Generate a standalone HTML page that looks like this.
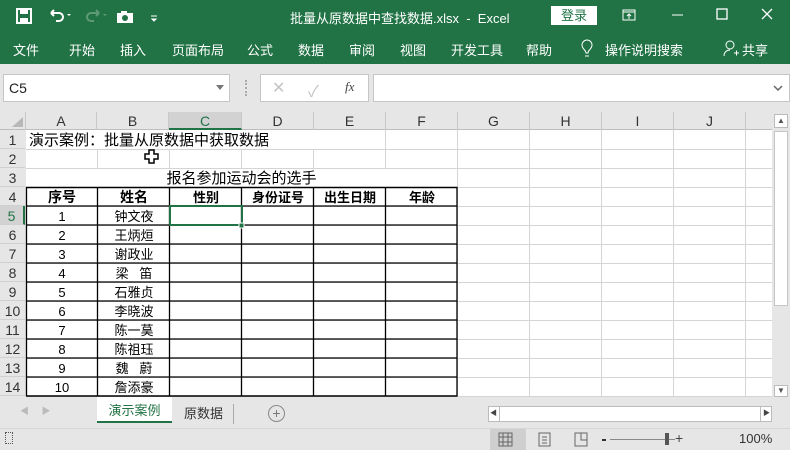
<!DOCTYPE html>
<html><head><meta charset="utf-8"><style>
*{margin:0;padding:0;box-sizing:border-box}
body{width:790px;height:450px;overflow:hidden;background:#e6e6e6;font-family:"Liberation Sans","Noto Sans CJK SC",sans-serif;position:relative}
.a{position:absolute}
.w{color:#fff}
.tab{position:absolute;top:40px;font-size:13px;color:#fff}
.ch{position:absolute;top:112px;height:18px;font-size:14px;color:#333;text-align:center;line-height:19px;border-right:1px solid #c8c8c8}
.rh{position:absolute;left:0;width:25px;height:19px;font-size:14px;color:#333;text-align:center;line-height:20px;border-bottom:1px solid #d0d0d0;background:#e6e6e6}
.hl{position:absolute;left:26px;width:746px;height:1px;background:#d4d4d4}
.vl{position:absolute;top:130px;width:1px;height:266px;background:#d4d4d4}
.c{position:absolute;font-size:13px;color:#000;text-align:center;line-height:19px;height:19px;font-family:"Liberation Sans","Noto Sans CJK SC",sans-serif}
</style></head><body>
<div class="a" style="left:0;top:0;width:790px;height:64px;background:#217346"></div>
<svg class="a" style="left:16px;top:8px" width="160" height="18" viewBox="0 0 160 18">
<rect x="1" y="1" width="14" height="14" fill="none" stroke="#fff" stroke-width="2"/><rect x="4" y="1" width="8" height="5" fill="#fff"/><rect x="4" y="10" width="8" height="5" fill="#fff"/>
<path d="M35 5h8a4 4 0 0 1 0 8h-3M35 5l3-3M35 5l3 3" stroke="#fff" stroke-width="2" fill="none"/><path d="M51 6l2 2 2-2z" fill="#fff"/>
<path d="M83 5h-8a4 4 0 0 0 0 8h3M83 5l-3-3M83 5l-3 3" stroke="#5f9a78" stroke-width="2" fill="none"/><path d="M87 6l2 2 2-2z" fill="#5f9a78"/>
<rect x="101" y="5" width="16" height="10" fill="#fff"/><rect x="105" y="3" width="6" height="3" fill="#fff"/><circle cx="109" cy="10" r="3" fill="#217346"/>
<path d="M135 8h6M136 11l2 2 2-2z" stroke="#fff" fill="#fff"/>
</svg>
<div class="a w" style="left:290px;top:8px;font-size:13px">批量从原数据中查找数据.xlsx&nbsp; - &nbsp;Excel</div>
<div class="a" style="left:551px;top:6px;width:46px;height:19px;background:#fff;color:#217346;font-size:13px;text-align:center;line-height:19px">登录</div>
<svg class="a" style="left:620px;top:6px" width="170" height="20"><rect x="3" y="4" width="12" height="10" fill="none" stroke="#fff"/><path d="M3 6h12M9 13V8M7 10l2-2 2 2" stroke="#fff" fill="none"/><path d="M52 9h11" stroke="#fff"/><rect x="97" y="3" width="10" height="10" fill="none" stroke="#fff" stroke-width="1.3"/><path d="M142 3l10 10M152 3l-10 10" stroke="#fff" stroke-width="1.3"/></svg>
<div class="tab" style="left:13px">文件</div><div class="tab" style="left:69px">开始</div><div class="tab" style="left:120px">插入</div><div class="tab" style="left:172px">页面布局</div><div class="tab" style="left:247px">公式</div><div class="tab" style="left:298px">数据</div><div class="tab" style="left:349px">审阅</div><div class="tab" style="left:400px">视图</div><div class="tab" style="left:451px">开发工具</div><div class="tab" style="left:526px">帮助</div>
<svg class="a" style="left:578px;top:38px" width="20" height="22"><path d="M8 15c0-3-4-4-4-8a5 5 0 0 1 10 0c0 4-4 5-4 8zM7 18h4" stroke="#fff" fill="none"/></svg>
<div class="tab" style="left:605px">操作说明搜索</div>
<svg class="a" style="left:722px;top:38px" width="18" height="22"><circle cx="8" cy="7" r="4" stroke="#fff" fill="none"/><path d="M2 18c0-4 3-6 6-6M12 15h5M14.5 12.5v5" stroke="#fff" fill="none"/></svg>
<div class="tab" style="left:742px">共享</div>
<div class="a" style="left:3px;top:74px;width:227px;height:28px;background:#fff;border:1px solid #c6c6c6;font-size:14px;line-height:27px;padding-left:5px;color:#222">C5</div>
<svg class="a" style="left:216px;top:85px" width="8" height="6"><path d="M0 0h8L4 5z" fill="#777"/></svg>
<div class="a" style="left:245px;top:80px;width:2px;height:16px;border-left:2px dotted #aaa"></div>
<div class="a" style="left:260px;top:74px;width:109px;height:28px;background:#fff;border:1px solid #c6c6c6"></div>
<div class="a" style="left:272px;top:78px;font-size:16px;color:#c4c4c4">✕</div><div class="a" style="left:308px;top:78px;font-size:16px;color:#c4c4c4">✓</div><div class="a" style="left:345px;top:79px;font-size:13px;font-style:italic;font-family:'Liberation Serif',serif;color:#444">fx</div>
<div class="a" style="left:373px;top:74px;width:417px;height:28px;background:#fff;border:1px solid #c6c6c6"></div>
<svg class="a" style="left:773px;top:85px" width="10" height="6"><path d="M1 1l4 4 4-4" stroke="#666" fill="none" stroke-width="1.5"/></svg>
<div class="a" style="left:0;top:112px;width:772px;height:18px;background:#e6e6e6;border-bottom:1px solid #bdbdbd"></div>
<div class="a" style="left:26px;top:130px;width:746px;height:267px;background:#fff"></div>
<svg class="a" style="left:10px;top:116px" width="14" height="12"><path d="M13 1v10H2z" fill="#b8b8b8"/></svg>
<div class="ch" style="left:25px;width:72px;border-left:1px solid #c8c8c8">A</div>
<div class="ch" style="left:97px;width:72px">B</div>
<div class="ch" style="left:169px;width:73px;background:#d2d2d2;border-bottom:2px solid #217346;color:#217346">C</div>
<div class="ch" style="left:242px;width:72px">D</div><div class="ch" style="left:314px;width:72px">E</div><div class="ch" style="left:386px;width:72px">F</div><div class="ch" style="left:458px;width:72px">G</div><div class="ch" style="left:530px;width:72px">H</div><div class="ch" style="left:602px;width:72px">I</div><div class="ch" style="left:674px;width:72px">J</div>
<div class="a" style="left:772px;top:112px;width:18px;height:285px;background:#e6e6e6"></div>
<div class="a" style="left:774px;top:114px;width:14px;height:14px;background:#fff;border:1px solid #bbb;font-size:8px;text-align:center;line-height:12px;color:#555">▲</div>
<div class="a" style="left:774px;top:131px;width:14px;height:175px;background:#fff;border:1px solid #c6c6c6"></div>
<div class="a" style="left:774px;top:385px;width:14px;height:12px;background:#fff;border:1px solid #bbb;font-size:8px;text-align:center;line-height:10px;color:#555">▼</div>
<div class="vl" style="left:97px"></div><div class="vl" style="left:169px"></div><div class="vl" style="left:241px"></div><div class="vl" style="left:313px"></div><div class="vl" style="left:385px"></div><div class="vl" style="left:457px"></div><div class="vl" style="left:529px"></div><div class="vl" style="left:601px"></div><div class="vl" style="left:673px"></div><div class="vl" style="left:745px"></div>
<div class="hl" style="top:149px"></div><div class="hl" style="top:168px"></div><div class="hl" style="top:187px"></div><div class="hl" style="top:206px"></div><div class="hl" style="top:225px"></div><div class="hl" style="top:244px"></div><div class="hl" style="top:263px"></div><div class="hl" style="top:282px"></div><div class="hl" style="top:301px"></div><div class="hl" style="top:320px"></div><div class="hl" style="top:339px"></div><div class="hl" style="top:358px"></div><div class="hl" style="top:377px"></div><div class="hl" style="top:396px"></div>
<div class="a" style="left:26px;top:130px;width:359px;height:19px;background:#fff"></div>
<div class="a" style="left:26px;top:169px;width:431px;height:18px;background:#fff"></div>
<div class="rh" style="top:130px">1</div><div class="rh" style="top:149px">2</div><div class="rh" style="top:168px">3</div><div class="rh" style="top:187px">4</div><div class="rh" style="top:206px;background:#d2d2d2;color:#217346;border-right:2px solid #217346">5</div><div class="rh" style="top:225px">6</div><div class="rh" style="top:244px">7</div><div class="rh" style="top:263px">8</div><div class="rh" style="top:282px">9</div><div class="rh" style="top:301px">10</div><div class="rh" style="top:320px">11</div><div class="rh" style="top:339px">12</div><div class="rh" style="top:358px">13</div><div class="rh" style="top:377px">14</div>
<svg class="a" style="left:0;top:0" width="790" height="450">
<g stroke="#000" stroke-width="1.5">
<path d="M26 187.5H457.5M26 396H457.5"/>
<path d="M26 206H457M26 225H457M26 244H457M26 263H457M26 282H457M26 301H457M26 320H457M26 339H457M26 358H457M26 377H457" stroke-width="1.2"/>
<path d="M26.5 187V396M97.5 187V396M169.5 187V396M241.5 187V396M313.5 187V396M385.5 187V396M457 187V396" stroke-width="1.3"/>
</g>
<rect x="170" y="206" width="72" height="19" fill="none" stroke="#217346" stroke-width="2"/>
<rect x="239" y="223" width="5" height="5" fill="#217346" stroke="#fff"/>
<path d="M149 150h5v4h4v5h-4v4h-5v-4h-4v-5h4z" fill="#fff" stroke="#000" stroke-width="1.5"/>
</svg>
<div class="c" style="left:29px;top:131px;text-align:left;font-size:15px">演示案例：批量从原数据中获取数据</div>
<div class="c" style="left:26px;top:169px;width:431px;font-size:15px">报名参加运动会的选手</div>
<div class="c" style="left:26px;top:188px;width:72px;font-weight:bold;font-size:14px">序号</div>
<div class="c" style="left:98px;top:188px;width:72px;font-weight:bold;font-size:14px">姓名</div>
<div class="c" style="left:170px;top:188px;width:72px;font-weight:bold">性别</div>
<div class="c" style="left:242px;top:188px;width:72px;font-weight:bold">身份证号</div>
<div class="c" style="left:314px;top:188px;width:72px;font-weight:bold">出生日期</div>
<div class="c" style="left:386px;top:188px;width:72px;font-weight:bold">年龄</div>
<div class="c" style="left:26px;top:207px;width:72px">1</div><div class="c" style="left:98px;top:207px;width:72px">钟文夜</div>
<div class="c" style="left:26px;top:226px;width:72px">2</div><div class="c" style="left:98px;top:226px;width:72px">王炳烜</div>
<div class="c" style="left:26px;top:245px;width:72px">3</div><div class="c" style="left:98px;top:245px;width:72px">谢政业</div>
<div class="c" style="left:26px;top:264px;width:72px">4</div><div class="c" style="left:98px;top:264px;width:72px">梁&nbsp;&nbsp;&nbsp;笛</div>
<div class="c" style="left:26px;top:283px;width:72px">5</div><div class="c" style="left:98px;top:283px;width:72px">石雅贞</div>
<div class="c" style="left:26px;top:302px;width:72px">6</div><div class="c" style="left:98px;top:302px;width:72px">李晓波</div>
<div class="c" style="left:26px;top:321px;width:72px">7</div><div class="c" style="left:98px;top:321px;width:72px">陈一茣</div>
<div class="c" style="left:26px;top:340px;width:72px">8</div><div class="c" style="left:98px;top:340px;width:72px">陈祖珏</div>
<div class="c" style="left:26px;top:359px;width:72px">9</div><div class="c" style="left:98px;top:359px;width:72px">魏&nbsp;&nbsp;&nbsp;蔚</div>
<div class="c" style="left:26px;top:378px;width:72px">10</div><div class="c" style="left:98px;top:378px;width:72px">詹添豪</div>
<div class="a" style="left:0;top:397px;width:790px;height:31px;background:#e6e6e6"></div>
<div class="a" style="left:20px;top:404px;font-size:9px;color:#bbb">◀&nbsp;&nbsp;&nbsp;&nbsp;&nbsp;▶</div>
<div class="a" style="left:97px;top:397px;width:75px;height:26px;background:#fff;border-bottom:2px solid #217346;color:#217346;font-size:13px;text-align:center;line-height:28px">演示案例</div>
<div class="a" style="left:184px;top:403px;font-size:13px;color:#333">原数据</div>
<div class="a" style="left:233px;top:404px;width:1px;height:20px;background:#aaa"></div>
<div class="a" style="left:268px;top:405px;width:17px;height:17px;border:1px solid #888;border-radius:50%;text-align:center;line-height:15px;font-size:14px;color:#777">+</div>
<div class="a" style="left:488px;top:406px;width:284px;height:16px;background:#fff;border:1px solid #bbb"></div>
<div class="a" style="left:488px;top:406px;width:12px;height:16px;border-right:1px solid #bbb;font-size:7px;line-height:16px;text-align:center;color:#444">◀</div>
<div class="a" style="left:760px;top:406px;width:12px;height:16px;border-left:1px solid #bbb;font-size:7px;line-height:16px;text-align:center;color:#444">▶</div>
<div class="a" style="left:0;top:428px;width:790px;height:22px;background:#e6e6e6;border-top:1px solid #d6d6d6"></div>
<div class="a" style="left:5px;top:432px;width:8px;height:12px;border:1px dotted #555"></div>
<div class="a" style="left:490px;top:429px;width:36px;height:21px;background:#cfcfcf"></div>
<svg class="a" style="left:498px;top:432px" width="120" height="16"><rect x="1" y="1" width="13" height="13" fill="none" stroke="#666"/><path d="M5 1v13M10 1v13M1 5h13M1 10h13" stroke="#666"/><rect x="41" y="1" width="11" height="13" fill="none" stroke="#666"/><path d="M44 5h5M44 8h5M44 11h5" stroke="#666"/><path d="M77 1h12v13H77zM83 1v7h6" stroke="#666" fill="none"/><path d="M104 8h4" stroke="#333" stroke-width="2"/></svg>
<div class="a" style="left:610px;top:439px;width:65px;height:1px;background:#888"></div>
<div class="a" style="left:665px;top:433px;width:4px;height:12px;background:#555"></div>
<div class="a" style="left:675px;top:430px;font-size:14px;color:#444">+</div>
<div class="a" style="left:739px;top:431px;font-size:13px;color:#333">100%</div>
</body></html>
